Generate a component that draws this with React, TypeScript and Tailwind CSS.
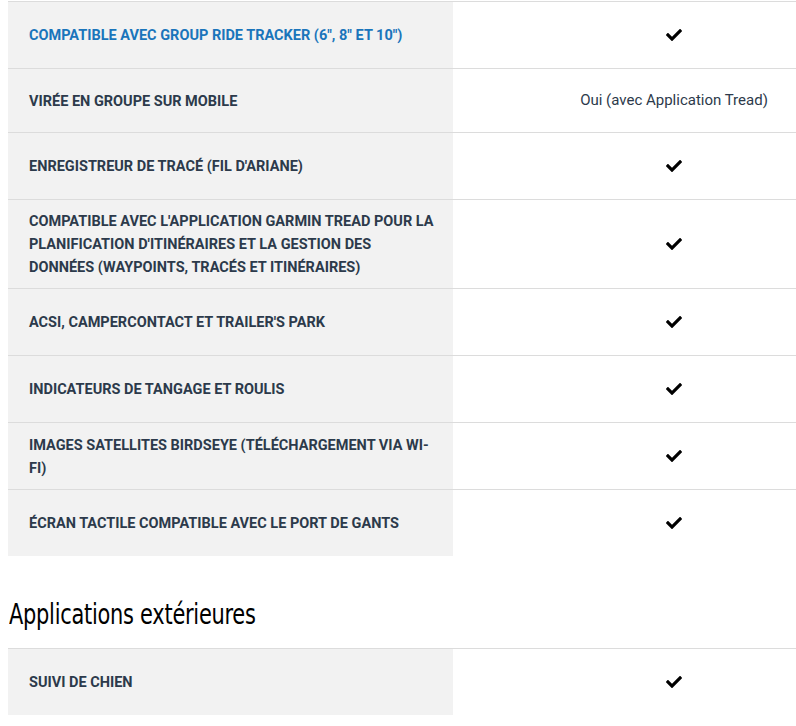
import { FaCheck } from "react-icons/fa";

type Row = {
  label: string;
  value?: string;
  link?: boolean;
  short?: boolean;
};

const navRows: Row[] = [
  { label: 'Compatible avec Group Ride Tracker (6", 8" et 10")', link: true },
  { label: "Virée en groupe sur mobile", value: "Oui (avec Application Tread)", short: true },
  { label: "Enregistreur de tracé (fil d'Ariane)" },
  {
    label:
      "Compatible avec l'application Garmin Tread pour la planification d'itinéraires et la gestion des données (waypoints, tracés et itinéraires)",
  },
  { label: "ACSI, CamperContact et Trailer's Park" },
  { label: "Indicateurs de tangage et roulis" },
  { label: "Images satellites BirdsEye (téléchargement via Wi-Fi)" },
  { label: "Écran tactile compatible avec le port de gants" },
];

const outdoorRows: Row[] = [{ label: "Suivi de chien" }];

const SpecRow = ({ label, value, link, short }: Row) => (
  <div className="grid grid-cols-[445px_442px] border-t border-[#dcdcdc]">
    <div
      className={`flex items-center bg-[#f2f2f2] pl-[21px] pr-[14px] pt-[10px] pb-[9px] ${
        short ? "min-h-[63px]" : "min-h-[66px]"
      }`}
    >
      <span
        className={`text-[14.5px] leading-[23px] font-bold uppercase ${
          link ? "text-[#1a75bb]" : "text-[#2c3a4b]"
        }`}
      >
        {label}
      </span>
    </div>
    <div className="flex items-center justify-center">
      {value ? (
        <span className="text-[15px] leading-[23px] text-[#2c3a4b]">{value}</span>
      ) : (
        <FaCheck className="w-4 h-4 text-black" />
      )}
    </div>
  </div>
);

export default function App() {
  return (
    <div className="w-[796px] h-[726px] overflow-hidden bg-white font-['Roboto',sans-serif]">
      <div className="w-[895px] pl-2 pt-px">
        {navRows.map((row) => (
          <SpecRow key={row.label} {...row} />
        ))}
        <h2 className="pl-px pt-[42px] pb-[16px] text-[28px] leading-[34px] text-black">
          <span className="inline-block origin-left scale-x-[0.83] font-stretch-condensed font-['DejaVu_Sans_Condensed','DejaVu_Sans',sans-serif] tracking-[-0.3px]">
            Applications extérieures
          </span>
        </h2>
        {outdoorRows.map((row) => (
          <SpecRow key={row.label} {...row} />
        ))}
      </div>
    </div>
  );
}
